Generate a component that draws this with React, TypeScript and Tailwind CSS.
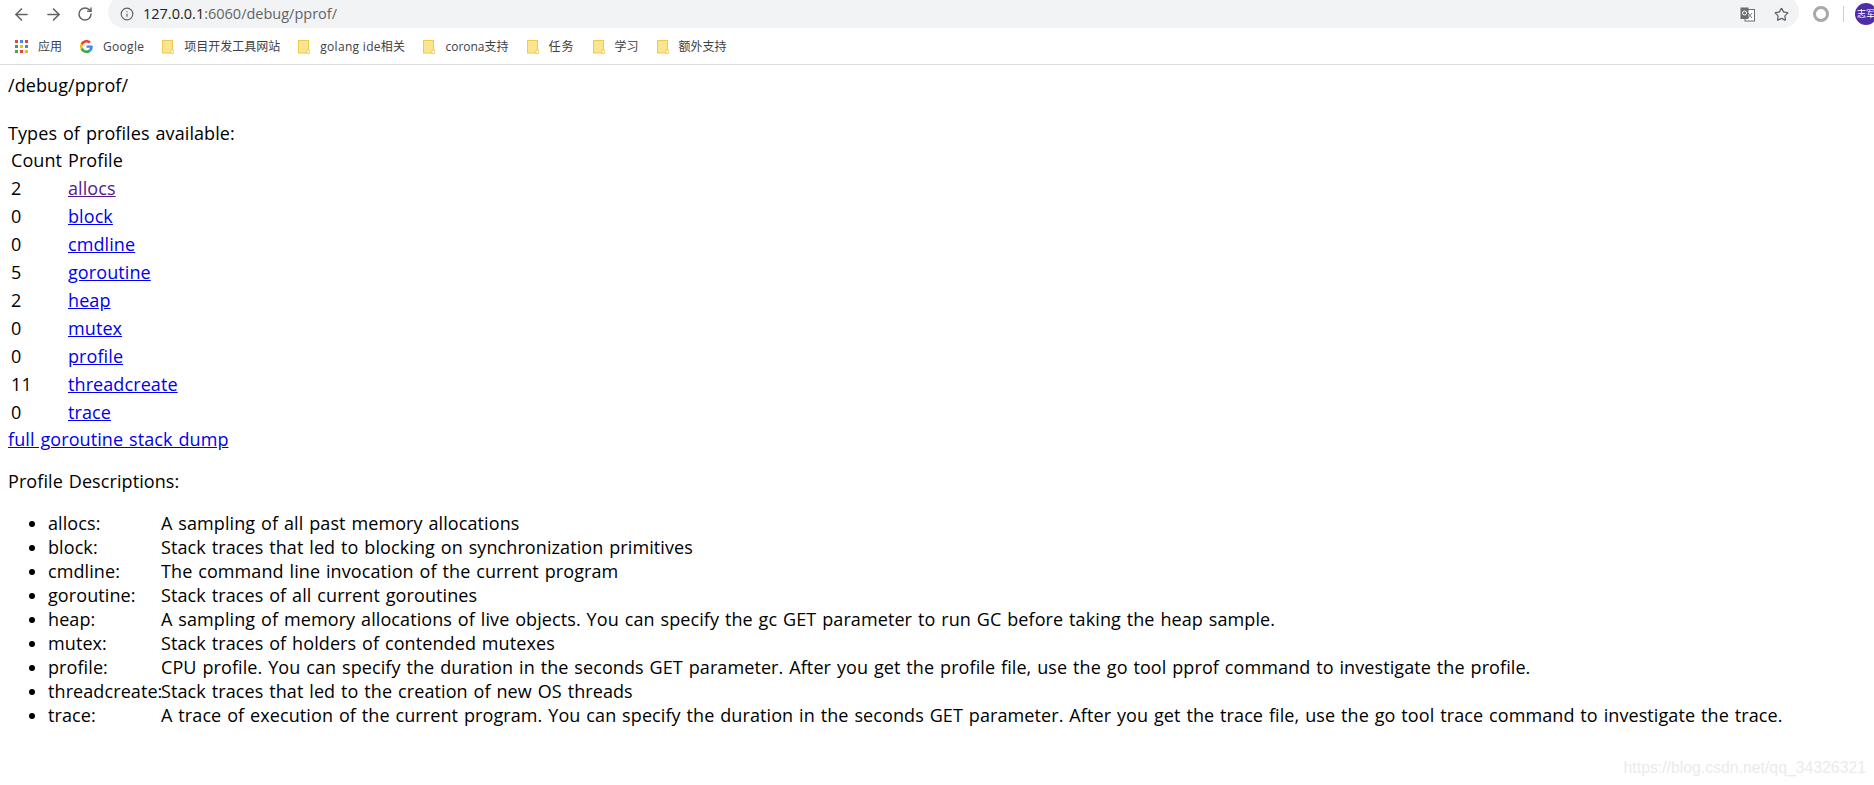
import { ArrowLeft, ArrowRight, RotateCw, Info, Star } from "lucide-react";

const bookmarks = [
  { label: "项目开发工具网站", className: "" },
  { label: "golang ide相关", className: "tracking-[0.3px]" },
  { label: "corona支持", className: "" },
  { label: "任务", className: "tracking-[1px]" },
  { label: "学习", className: "" },
  { label: "额外支持", className: "" },
];

const profiles = [
  { count: 2, name: "allocs" },
  { count: 0, name: "block" },
  { count: 0, name: "cmdline" },
  { count: 5, name: "goroutine" },
  { count: 2, name: "heap" },
  { count: 0, name: "mutex" },
  { count: 0, name: "profile" },
  { count: 11, name: "threadcreate" },
  { count: 0, name: "trace" },
];

const descriptions = [
  ["allocs:", "A sampling of all past memory allocations"],
  ["block:", "Stack traces that led to blocking on synchronization primitives"],
  ["cmdline:", "The command line invocation of the current program"],
  ["goroutine:", "Stack traces of all current goroutines"],
  ["heap:", "A sampling of memory allocations of live objects. You can specify the gc GET parameter to run GC before taking the heap sample."],
  ["mutex:", "Stack traces of holders of contended mutexes"],
  ["profile:", "CPU profile. You can specify the duration in the seconds GET parameter. After you get the profile file, use the go tool pprof command to investigate the profile."],
  ["threadcreate:", "Stack traces that led to the creation of new OS threads"],
  ["trace:", "A trace of execution of the current program. You can specify the duration in the seconds GET parameter. After you get the trace file, use the go tool trace command to investigate the trace."],
];

const FolderIcon = () => (
  <svg width="12" height="14" viewBox="0 0 12 14" className="shrink-0">
    <rect x="0.5" y="0.5" width="10" height="12.5" fill="#fde58f" stroke="#eec94e" />
    <rect x="9" y="10" width="2.5" height="3.5" fill="#fff" stroke="#eec94e" strokeWidth="0.8" />
  </svg>
);

const AppsIcon = () => {
  const colors = ["#ea4335", "#4285f4", "#ea4335", "#34a853", "#fbbc05", "#4285f4", "#34a853", "#ea4335", "#fbbc05"];
  return (
    <div className="grid grid-cols-3 gap-[2px] w-[13px]">
      {colors.map((c, i) => (
        <div key={i} className="w-[3px] h-[3px]" style={{ backgroundColor: c }} />
      ))}
    </div>
  );
};

const GoogleIcon = () => (
  <svg width="13" height="13" viewBox="0 0 48 48" className="block">
    <path fill="#EA4335" d="M24 9.500c3.500 0 6.700 1.200 9.200 3.600l6.900-6.900C35.900 2.400 30.400 0 24 0 14.600 0 6.500 5.400 2.600 13.200l8 6.200C12.500 13.600 17.800 9.500 24 9.500z" />
    <path fill="#4285F4" d="M47 24.500c0-1.600-.1-3.100-.4-4.500H24v9h12.900c-.6 3-2.200 5.500-4.700 7.200l7.700 6C44.400 37.900 47 31.800 47 24.500z" />
    <path fill="#FBBC05" d="M10.600 28.600c-.5-1.400-.8-3-.8-4.600s.3-3.200.8-4.600l-8-6.200C.9 16.500 0 20.100 0 24s.9 7.500 2.600 10.800l8-6.200z" />
    <path fill="#34A853" d="M24 48c6.500 0 11.900-2.100 15.900-5.800l-7.700-6c-2.100 1.500-4.900 2.300-8.200 2.300-6.200 0-11.500-4.100-13.400-9.900l-8 6.200C6.500 42.600 14.600 48 24 48z" />
  </svg>
);

const TranslateIcon = () => (
  <svg width="15" height="15" viewBox="0 0 15 15">
    <rect x="5" y="2.500" width="9.500" height="11.500" fill="#fff" stroke="#6b6d70" />
    <path d="M8 6l4 5M12 6l-4 5" stroke="#6b6d70" strokeWidth="0.9" fill="none" />
    <rect x="0.500" y="0.500" width="8" height="11.500" fill="#6b6d70" />
    <circle cx="4.500" cy="6" r="2" fill="none" stroke="#fff" strokeWidth="1" />
  </svg>
);

export default function App() {
  return (
    <div className="w-[1874px] h-[785px] overflow-hidden bg-white relative font-['Open_Sans','Noto_Sans_CJK_SC',sans-serif] text-black">
      <header className="h-[65px] border-b border-[#dadce0]">
        <div className="h-[28px] flex items-center overflow-hidden">
          <div className="w-[108px] shrink-0 flex items-center pl-[12px] gap-[13px] text-[#5f6368]">
            <ArrowLeft size={19} strokeWidth={2} />
            <ArrowRight size={19} strokeWidth={2} />
            <RotateCw size={16} strokeWidth={2.200} className="ml-[1px]" />
          </div>
          <div className="w-[1691px] shrink-0 h-[32px] -mt-[4px] pt-[4px] bg-[#f1f3f4] rounded-full flex items-center pl-[12px]">
            <Info size={14} className="text-[#5f6368]" strokeWidth={2} />
            <span className="ml-[9px] text-[14.500px] text-[#5f6368]">
              <span className="text-[#202124]">127.0.0.1</span>:6060/debug/pprof/
            </span>
            <div className="ml-auto flex items-center gap-[19px] pr-[10px]">
              <TranslateIcon />
              <Star size={15} className="text-[#5f6368]" strokeWidth={2} />
            </div>
          </div>
          <div className="ml-[14px] w-[16px] h-[16px] shrink-0 rounded-full border-[3px] border-[#a8a8a8]" />
          <div className="ml-[14px] w-px h-[16px] shrink-0 bg-[#d0d0d0]" />
          <div className="ml-[11px] w-[22px] h-[22px] shrink-0 rounded-full bg-[#4f2ca8] text-white text-[9px] leading-[22px] pl-[2px] overflow-hidden whitespace-nowrap">
            志军
          </div>
        </div>
        <div className="h-[36px] pt-[1px] flex items-center pl-[15px] text-[12px] text-[#3c4043]">
          <AppsIcon />
          <span className="ml-[10px]">应用</span>
          <span className="ml-[18px]"><GoogleIcon /></span>
          <span className="ml-[10px] tracking-[0.3px]">Google</span>
          {bookmarks.map((b) => (
            <span key={b.label} className="flex items-center ml-[18px]">
              <FolderIcon />
              <span className={`ml-[10px] ${b.className}`}>{b.label}</span>
            </span>
          ))}
        </div>
      </header>

      <main className="px-2 pt-[8px] text-[18px] leading-[24px] tracking-[0.09px] [word-spacing:1.1px]">
        <div>/debug/pprof/</div>
        <br />
        <div>Types of profiles available:</div>
        <table className="border-separate border-spacing-[2px]">
          <thead>
            <tr>
              <td className="p-[1px] min-w-[55px]">Count</td>
              <td className="p-[1px]">Profile</td>
            </tr>
          </thead>
          <tbody>
            {profiles.map((p) => (
              <tr key={p.name}>
                <td className="p-[1px]">{p.count}</td>
                <td className="p-[1px]">
                  <a href="#" className={p.name === "allocs" ? "underline text-[#551a8b]" : "underline text-[#0000ee]"}>
                    {p.name}
                  </a>
                </td>
              </tr>
            ))}
          </tbody>
        </table>
        <a href="#" className="underline text-[#0000ee]">full goroutine stack dump</a>
        <p className="mt-[18px] mb-[18px]">Profile Descriptions:</p>
        <ul className="list-disc pl-[40px]">
          {descriptions.map(([name, text]) => (
            <li key={name}>
              <div className="inline-block w-[113px]">{name}</div>
              <span>{text}</span>
            </li>
          ))}
        </ul>
      </main>

      <div className="absolute right-[8px] top-[760px] font-['Liberation_Sans',sans-serif] text-[15.800px] leading-[16px] text-[#ebebeb]">
        https://blog.csdn.net/qq_34326321
      </div>
    </div>
  );
}
